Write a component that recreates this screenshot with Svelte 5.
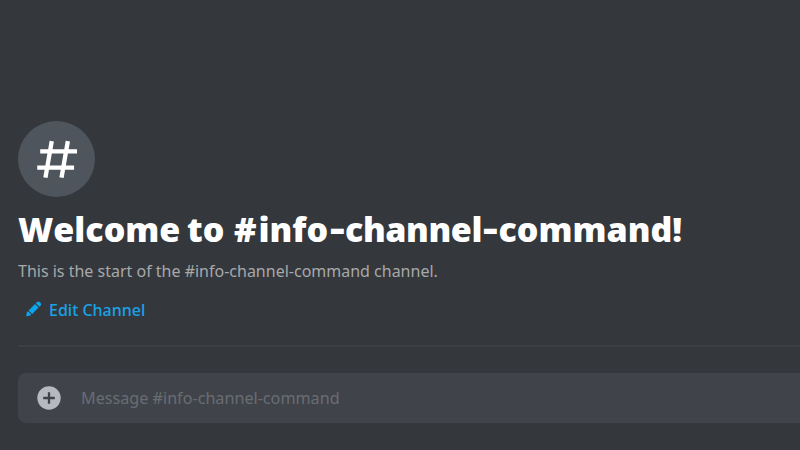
<script>
  const channel = '#info-channel-command';
</script>

<main>
  <section class="welcome">
    <div class="channel-icon">
      <svg width="77" height="77" viewBox="0 0 77 77" fill="none" stroke="#fff" stroke-width="4.4" stroke-linejoin="round">
        <path d="M33.7 20.3 27.3 57.3M50 20.3 43.6 57.3M22 30.8H59.3M19 47.3H56.3" />
      </svg>
    </div>
    <h1><span class="w1">Welcome</span> <span class="w2">to</span> <span class="hash">#</span><span class="info">info</span><span class="dash"><i>-</i></span><span class="chan">channel</span><span class="dash"><i>-</i></span><span class="cmd">command!</span></h1>
    <p><span>This is the start of the {channel} channel.</span></p>
    <button class="edit">
      <svg width="16" height="16" viewBox="0 0 16 16" fill="#0ba6ee">
        <path d="M9.8 2.3 11 1Q12.5-.2 14.2 1.4 15.8 3 14.7 4.5L13.4 5.8ZM9 3.1 12.6 6.6 6.2 13 2.6 9.5ZM1.9 10.3 5.3 13.6 4.1 14.6 .9 15.2Q.2 15.2.3 14.5L.9 11.3Z" />
      </svg>
      <span>Edit Channel</span>
    </button>
  </section>
  <div class="composer">
    <svg width="24" height="24" viewBox="0 0 24 24">
      <circle cx="12" cy="12" r="11.7" fill="#b6b9be" />
      <path d="M12 6.2V17.8M6.2 12H17.8" stroke="#3f4249" stroke-width="2.3" />
    </svg>
    <span>Message {channel}</span>
  </div>
</main>

<style>
  :global(body) { background: #34383d; }
  main {
    box-sizing: border-box;
    width: 800px;
    height: 450px;
    padding: 121px 0 0 18px;
    overflow: hidden;
    background: #34383d;
    font-family: "Noto Sans", sans-serif;
  }
  .welcome {
    box-sizing: border-box;
    height: 226px;
    border-bottom: 2px solid #3c3f43;
  }
  .channel-icon {
    width: 77px;
    height: 76px;
    border-radius: 50%;
    background: #4e555d;
  }
  svg { display: block; flex: none; }
  .channel-icon svg { height: 76px; }
  h1 {
    display: flex;
    height: 64px;
    margin: 0;
    line-height: 64px;
    color: #fff;
    font-family: "Open Sans", sans-serif;
    font-size: 34px;
    font-weight: 800;
    white-space: nowrap;
  }
  h1 span { flex: none; }
  .w1 { width: 169px; }
  .w2 { width: 47px; }
  .hash { width: 24.5px; }
  .info { width: 71px; }
  .dash { width: 15.5px; }
  .dash i {
    display: inline-block;
    font-style: normal;
    transform: translateY(-2.5px) scaleX(1.36);
    transform-origin: left;
  }
  .chan { width: 138px; letter-spacing: -0.4px; }
  p {
    height: 20px;
    margin: 0;
    line-height: 20px;
    color: #a7a8aa;
    font-size: 17px;
    white-space: nowrap;
  }
  p span, .edit span, .composer span {
    display: inline-block;
    transform: scaleX(0.941);
    transform-origin: left;
  }
  .edit {
    display: flex;
    align-items: center;
    gap: 7px;
    height: 24px;
    margin-top: 17px;
    padding: 0 0 0 8px;
    border: 0;
    background: none;
    color: #18a3e6;
    font: 500 17px/24px "Noto Sans", sans-serif;
    white-space: nowrap;
  }
  .edit svg { margin-top: -3px; }
  .composer {
    display: flex;
    align-items: center;
    gap: 20px;
    box-sizing: border-box;
    height: 50px;
    margin-top: 26px;
    padding-left: 19px;
    border-radius: 8px 0 0 8px;
    background: #40444a;
    color: #696c73;
    font-size: 17px;
    line-height: 22px;
    white-space: nowrap;
  }
  .composer span { margin-top: -1px; transform: scaleX(0.95); }
</style>
